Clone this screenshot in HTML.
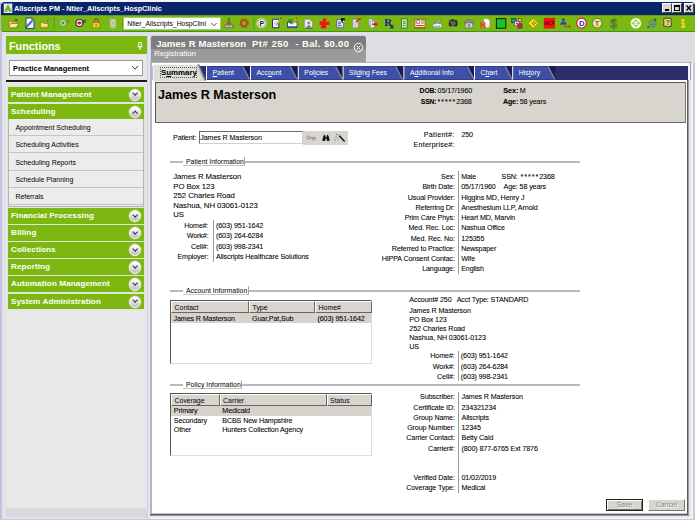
<!DOCTYPE html>
<html><head><meta charset="utf-8"><title>Allscripts PM - Ntier_Allscripts_HospClinic</title>
<style>
*{box-sizing:border-box;margin:0;padding:0}
html,body{width:695px;height:520px;overflow:hidden;background:#e0e0ec;font-family:"Liberation Sans",sans-serif;}
body{position:relative;font-size:6.9px;color:#000;line-height:1}
.a{position:absolute;white-space:nowrap}
.t{position:absolute;white-space:nowrap;line-height:10px;height:10px;font-size:7.15px;letter-spacing:-0.12px;color:#000;-webkit-text-stroke:0.07px #000}
.r{text-align:right}
.b{font-weight:bold}
#title{left:1px;top:2px;width:694px;height:12.5px;background:#0a246a;border-radius:4px 4px 0 0}
#toolbar{left:1px;top:14.5px;width:694px;height:17px;background:#7cb811;border-top:1px solid #5f9c12;border-bottom:1.3px solid #3a9420}
.acc{position:absolute;left:8px;width:136px;height:15.5px;background:#7cb811;color:#fff;font-weight:bold;font-size:8.1px;letter-spacing:0.1px;line-height:16.8px;padding-left:3px;white-space:nowrap}
.acc i{position:absolute;right:2.9px;top:2px;width:12.3px;height:12.3px;border-radius:50%;background:linear-gradient(#fdfdfd 10%,#c4c4c4 90%);border:1.2px solid #f4f6f0;box-shadow:0 0 0 0.4px #b8c8a0}
.acc i:after{content:"";position:absolute;left:3px;top:1.9px;width:3.3px;height:3.3px;border-right:1.2px solid #333;border-bottom:1.2px solid #333;transform:rotate(45deg)}
.acc i.up:after{top:4.2px;transform:rotate(225deg)}
.sub{position:absolute;left:9px;width:134px;height:17px;font-size:6.95px;line-height:17.6px;padding-left:6.4px;border-bottom:1px solid #c4c4c4;color:#000;white-space:nowrap}
.tab{position:absolute;top:66px;height:14px;background:#3c50a6;color:#fff;font-size:6.9px;line-height:13px;border-left:1px solid #fff;}
.tb{color:#fff;font-size:6.9px;line-height:12px}
u{text-decoration-thickness:0.5px;text-underline-offset:0.5px}
.grp{position:absolute;height:1.5px;background:#bababa;border-bottom:0}
.glab{position:absolute;height:9.6px;background:#fff;border-right:1px solid #a8a8a8;border-bottom:1px solid #c4c4c4;font-size:6.9px;line-height:9.6px;padding-left:3px;color:#000;white-space:nowrap}
.lst{position:absolute;left:170px;width:202.3px;background:#fff;border:1px solid #555;border-right-color:#ddd;border-bottom-color:#ddd}
.hd{position:absolute;top:0;height:12px;background:#d8d5ce;border:1px solid #fff;border-right-color:#666;border-bottom-color:#666;font-size:6.9px;line-height:11px;padding-left:2.6px;color:#000}
.sel{position:absolute;left:0;width:200.3px;height:10px;background:#d6d3cc}
.vsep{position:absolute;width:1px;background:#9a9a9a}
.btn{position:absolute;top:499px;height:12px;background:#d8d5ce;color:#858585;text-shadow:0.7px 0.7px 0 #fff;font-size:6.9px;line-height:10px;text-align:center;border:1px solid #fff;border-right-color:#777;border-bottom-color:#777}
</style></head><body>
<!-- window frame -->
<div class="a" style="left:0;top:0;width:695px;height:3px;background:#f4f4fa"></div>
<div class="a" style="left:0;top:2px;width:1.4px;height:518px;background:#b8b8d6"></div>
<div class="a" id="title"></div>
<svg class="a" style="left:2.5px;top:3px" width="10" height="10.5" viewBox="0 0 10 11"><rect x="0.5" y="0.5" width="9" height="10" fill="#e6ece0"/><path d="M1.5 9 L5 2.5 L8.5 9 M3 9.3 L5 5.5 L7 9.3" stroke="#6aa51e" stroke-width="1.2" fill="none"/></svg>
<div class="a b" style="left:14px;top:2.7px;font-size:7.25px;line-height:11px;color:#fff">Allscripts PM - Ntier_Allscripts_HospClinic</div>
<!-- window buttons -->
<div class="a" style="left:662px;top:3px;width:10px;height:10px;background:#d8d5ce;border:1px solid #fff;border-right-color:#444;border-bottom-color:#444"></div>
<div class="a" style="left:665px;top:9px;width:4px;height:2px;background:#000"></div>
<div class="a" style="left:672px;top:3px;width:10px;height:10px;background:#d8d5ce;border:1px solid #fff;border-right-color:#444;border-bottom-color:#444"></div>
<div class="a" style="left:674px;top:5px;width:6px;height:6px;border:1px solid #000;border-top-width:2px"></div>
<div class="a" style="left:684px;top:3px;width:10px;height:10px;background:#d8d5ce;border:1px solid #fff;border-right-color:#444;border-bottom-color:#444"></div>
<svg class="a" style="left:684px;top:3px" width="10" height="10"><path d="M2.5 2.5 L7 7.5 M7 2.5 L2.5 7.5" stroke="#000" stroke-width="1.3"/></svg>
<div class="a" id="toolbar"></div>
<svg class="a" style="left:0;top:14px" width="695" height="19" viewBox="0 14 695 19" font-family="Liberation Sans,sans-serif">
<path d="M8.6 21 h3.2 l1 1 h4.4 v5.6 h-8.600z" fill="#e8d050" stroke="#807020" stroke-width=".7"/><path d="M8.600 27.700 l2.300 -4.200 h7.800 l-2.400 4.200z" fill="#f8ec98" stroke="#807020" stroke-width=".7"/><path d="M14 20.200 q2 -1.500 3.400 0.300 m0 0 l-1.500 0 m1.500 0 l0.100 -1.400" stroke="#2848a0" stroke-width=".8" fill="none"/>
<path d="M26 18 h5.800 l2.200 2.200 v8.200 h-8z" fill="#f4f6ff" stroke="#283c90" stroke-width="1"/><path d="M31.800 18 v2.200 h2.200" fill="none" stroke="#283c90" stroke-width=".6"/><path d="M26.200 27 L32.400 20.800" stroke="#5068c0" stroke-width="2"/><path d="M25.600 27.800 l1.400 -0.400" stroke="#203070" stroke-width="1"/>
<path d="M40.300 22.300 h2.800 l1 1 h4 v4.500 h-7.800z" fill="#ecd454" stroke="#807020" stroke-width=".7"/><path d="M41.200 25 h6" stroke="#f8f0a0" stroke-width="1.200"/><path d="M47.200 20.800 l1.200 -1.300" stroke="#2040a0" stroke-width="1"/>
<path d="M54.2 17.5 V30" stroke="#3c9a50" stroke-width="1.2" stroke-dasharray="1.6 0.5"/>
<path d="M65.500 21.500 l4 -2.300 l-1 2.300 l1 0.500 l-3.500 1.500z" fill="#5a8a50"/><circle cx="63" cy="23" r="3.400" fill="#c4e4a8" stroke="#5a9a3a" stroke-width=".9"/><circle cx="63" cy="23" r="1.500" fill="#22aa22"/>
<path d="M82 21.500 l4.200 -2.500 l-1 2.500 l1 0.600 l-3.800 1.600z" fill="#2a5a30"/><circle cx="79.400" cy="23" r="3.500" fill="#fff" stroke="#203070" stroke-width="1.100"/><circle cx="79.400" cy="23" r="1.700" fill="#e81818"/><path d="M76.500 23 h5.800" stroke="#e81818" stroke-width=".8"/>
<path d="M94.300 23 v-2 a2 2 0 0 1 4 0 v2" stroke="#a05828" stroke-width="1.300" fill="none"/><path d="M95 20 l1 -1.200 M97.600 20 l-0.600 -1.400" stroke="#3858b0" stroke-width=".8"/><rect x="92.800" y="22.800" width="7" height="5" fill="#f0d428" stroke="#907010" stroke-width=".6"/><path d="M95.600 24 l1.800 1.200 l-1.800 1.300z" fill="#d02818"/>
<rect x="110" y="18.600" width="6" height="9.500" fill="#c4e0a4" stroke="#86b060" stroke-width=".8"/><path d="M111.300 20 h3.400 l-1.700 3.300 l1.700 3.300 h-3.400 l1.700 -3.300z" fill="#e4f0d4" stroke="#7aa058" stroke-width=".5"/>
<path d="M122.6 17.5 V30" stroke="#3c9a50" stroke-width="1.2" stroke-dasharray="1.6 0.5"/>
<circle cx="228.900" cy="19" r="1.500" fill="#3a8a2a"/><path d="M226.800 24.400 q0 -4 2.100 -4 q2.100 0 2.100 4z" fill="#a84820"/><path d="M228.200 21 v3 M229.600 21 v3" stroke="#60a040" stroke-width=".5"/><rect x="224.300" y="24.700" width="9.600" height="2.900" rx="1.200" fill="#8a8a8a" stroke="#555" stroke-width=".4"/><path d="M225.600 26.200 h7" stroke="#fff" stroke-width="1" stroke-dasharray="1 0.800"/>
<circle cx="244.100" cy="23.200" r="3.600" fill="none" stroke="#b84c20" stroke-width="2.400" stroke-dasharray="1.900 0.930"/><circle cx="244.100" cy="23.200" r="2.900" fill="none" stroke="#b84c20" stroke-width="1.500"/><circle cx="244.100" cy="23.200" r="3.300" fill="none" stroke="#e02020" stroke-width=".7" stroke-dasharray="0.700 1.890"/>
<path d="M253.8 17.5 V30" stroke="#3c9a50" stroke-width="1.2" stroke-dasharray="1.6 0.5"/>
<circle cx="261.500" cy="23.200" r="5" fill="#d4e8bc" stroke="#a4cc78" stroke-width=".8"/><circle cx="261.500" cy="23.200" r="3.900" fill="#eef4e8" stroke="#708060" stroke-width=".5"/><text x="261.700" y="25.700" font-size="6.800" font-weight="bold" text-anchor="middle" fill="#1c241c">P</text>
<path d="M272.500 19.300 h6.300 v8.400 h-6.300z" fill="#fff" stroke="#24347c" stroke-width="1"/><path d="M273.800 21.500 h3 M273.800 23.300 h3.500 M273.800 25.200 h3.500" stroke="#9098b8" stroke-width=".6"/><path d="M277.300 24 L280.800 18.300" stroke="#d8b020" stroke-width="1.500"/><path d="M280.300 19 L281 17.900" stroke="#3048a0" stroke-width="1.500"/><path d="M277 24.600 l0.500 -1" stroke="#222" stroke-width="1"/>
<path d="M287.500 22 h9.600 v5.600 h-9.600z" fill="#f4f8ff" stroke="#20307c" stroke-width=".8"/><path d="M287.500 26.300 h9.600 v1.300 h-9.600z" fill="#2840a8"/><path d="M288.300 19 l4.500 0.500 l-0.500 3.500 l-4 -0.500z" fill="#2e9a3e"/><path d="M289 21.800 l3 2 " stroke="#186828" stroke-width="1.200"/><path d="M292.600 24.400 L296.600 18.400" stroke="#d8b020" stroke-width="1.400"/><path d="M296.200 19 L296.900 18" stroke="#c03020" stroke-width="1.400"/>
<path d="M304.300 19.200 h5.300 l3 3 v6.200 h-8.300z" fill="#e8e8e8" stroke="#888" stroke-width=".8"/><circle cx="308.800" cy="23" r="1.500" fill="#8a8a8a"/><path d="M305.800 27.800 q3 -5 6 0z" fill="#777"/><path d="M305 28.300 h8" stroke="#555" stroke-width=".8"/>
<path d="M322.800 18.600 h3.400 v3 h3.200 v3.400 h-3.200 v3.400 h-3.400 v-3.400 h-3.200 v-3.400 h3.200z" fill="#f01414"/><path d="M325.500 22.500 l2.500 -4" stroke="#c09020" stroke-width="1.100"/><path d="M321 28 l2 -2.500" stroke="#c01010" stroke-width="1.500"/>
<path d="M336.800 19.500 h6.800 v8.300 h-6.800z" fill="#f0f4ff" stroke="#405090" stroke-width=".8"/><path d="M338 22 h3 M338 23.800 h3 M338 25.800 h4" stroke="#3858c0" stroke-width="1"/><path d="M341 18 h3.800 v2 l-1 3 h-1.800 l-1 -2.500z" fill="#111"/><circle cx="343.600" cy="21.600" r="1.100" fill="#e8e8e8"/>
<path d="M352.600 19.300 h5.500 v8.500 h-5.500z" fill="#f0f0f0" stroke="#808890" stroke-width=".8"/><path d="M354 21.500 v5 M355.800 22.500 v4" stroke="#a0a8b0" stroke-width=".8"/><path d="M356 22.300 l2.500 -2.800" stroke="#e81818" stroke-width="1.600"/><path d="M357.300 18.300 h4.500 l-2 1.800z" fill="#e81818"/>
<path d="M368.800 19 h4 v6 h-4z" fill="#f4f4f4" stroke="#808890" stroke-width=".7"/><path d="M370.200 21 h4.200 v6.800 h-4.200z" fill="#ececec" stroke="#808890" stroke-width=".7"/><path d="M372 24.200 h4" stroke="#e81818" stroke-width="1.600"/><path d="M375.300 22 l3 2.200 l-3 2.200z" fill="#e81818"/>
<text x="384.200" y="26.300" font-size="11" font-weight="bold" fill="#1a1a8c" font-family="Liberation Serif,serif">R</text><path d="M389.800 24.500 L393.600 28.500 M393.400 25 L390.200 28.700" stroke="#1a1a8c" stroke-width="1.100"/>
<rect x="401.400" y="18.800" width="5.800" height="9.300" fill="#c8e8b0" stroke="#3a6a3a" stroke-width=".8"/><path d="M403 21.300 h2.600 M403 23.400 h2.600 M403 25.500 h2.600" stroke="#18c028" stroke-width="1.100"/>
<rect x="414.800" y="19.300" width="10.200" height="8.300" fill="#fbf4e4" stroke="#b05c14" stroke-width="1"/><circle cx="418" cy="21.800" r="1.900" fill="#e8e8e8" stroke="#444" stroke-width=".6"/><path d="M421 21 h3 M421 23 h3" stroke="#c04020" stroke-width=".8"/><path d="M416.300 25.600 h7.500" stroke="#d03020" stroke-width="1.100"/><path d="M414.500 28.200 h10.800" stroke="#804010" stroke-width=".6"/>
<path d="M433.300 24.200 l6.600 -5.200 l1.300 1.200 l-5.800 5z" fill="#b8b8b8" stroke="#606060" stroke-width=".6"/><ellipse cx="437.300" cy="25.600" rx="4.500" ry="2.300" fill="#f0f4f8" stroke="#708090" stroke-width=".7"/><path d="M434.500 25.800 q2.800 1.800 5.600 0" stroke="#5080c0" stroke-width=".9" fill="none"/>
<rect x="448.800" y="20.300" width="8.600" height="6" rx=".8" fill="#2a2a2a"/><rect x="451" y="19.300" width="3.500" height="1.500" fill="#2a2a2a"/><circle cx="453.200" cy="23.400" r="1.900" fill="#555" stroke="#999" stroke-width=".6"/><rect x="449.600" y="21.200" width="1.300" height="1" fill="#aaa"/>
<path d="M464 22 q5 -4.800 10 0 l-0.800 1.600 l-2.200 -1.200 h-4 l-2.200 1.200z" fill="#909090" stroke="#555" stroke-width=".5"/><path d="M466 22.800 h6 l1.500 5 h-9z" fill="#d4d4d4" stroke="#666" stroke-width=".7"/><circle cx="469" cy="25.300" r="1.400" fill="#888"/>
<path d="M483.800 18.800 h4 l2 2 v6 h-6z" fill="#fff" stroke="#999" stroke-width=".6"/><path d="M480.200 22 h1.900 v2.200 h1.400 v-2.200 h1.900 v6.200 h-1.900 v-2.300 h-1.400 v2.300 h-1.900z" fill="#e0502c"/><path d="M486 23 h2.800 v4.500 h-2.800z" fill="#f4ece8"/>
<rect x="496.400" y="18.600" width="9.400" height="9.600" fill="#16c430" stroke="#0c1c0c" stroke-width="1"/>
<rect x="511.500" y="18.500" width="4.500" height="4" fill="#2c9c4c" stroke="#1c3c8c" stroke-width=".8"/><rect x="514.500" y="21.200" width="4.800" height="4.600" fill="#f0f0f8" stroke="#3040a0" stroke-width=".6"/><rect x="517.800" y="23.800" width="4.200" height="4.300" fill="#e81c1c" stroke="#2030a0" stroke-width=".6"/><rect x="518.300" y="18.500" width="3.200" height="2.800" fill="#e8d020" stroke="#403010" stroke-width=".5"/><circle cx="516.800" cy="23.300" r="1.100" fill="#e04040"/>
<path d="M533.200 18.300 L538 23.300 L533.200 28.300 L528.400 23.300z" fill="#f4e41c" stroke="#a09010" stroke-width=".7"/><path d="M534.300 21.300 L532.200 23.300 L534.300 25.300" stroke="#605010" stroke-width=".9" fill="none"/><circle cx="535" cy="23.300" r=".7" fill="#605010"/>
<rect x="543.800" y="17.900" width="11.200" height="10.600" fill="#f01616"/><text x="549.400" y="25" font-size="5" font-weight="bold" text-anchor="middle" fill="#5a0808">HCF</text>
<circle cx="563.400" cy="19.700" r="1.500" fill="#2c48a8"/><path d="M560.400 24.400 q0 -3 3 -3 q3 0 3 3z" fill="#2c48a8"/><path d="M560 24.600 h7" stroke="#3c58b8" stroke-width=".7"/><path d="M563.500 26.700 h6.500" stroke="#b04820" stroke-width="1.100"/><path d="M569 25 l2.200 1.700 l-2.200 1.700z" fill="#b04820"/>
<circle cx="581.500" cy="23.100" r="4.900" fill="#fff" stroke="#d42424" stroke-width="1.200"/><text x="581.700" y="25.900" font-size="7.800" font-weight="bold" text-anchor="middle" fill="#2430c4">D</text>
<circle cx="597.100" cy="23.100" r="4.900" fill="#dce8a4" stroke="#6c8430" stroke-width="1.100"/><text x="597.100" y="25.800" font-size="7.600" font-weight="bold" text-anchor="middle" fill="#b8501c">T</text>
<text x="613.600" y="27.600" font-size="12.500" text-anchor="middle" fill="#9ccc50" stroke="#35553a" stroke-width=".55">$</text>
<circle cx="635.900" cy="23.200" r="5.300" fill="#f6faf0"/><path d="M635.900 18.900 l2 2.600 h-4z M635.900 27.500 l2 -2.600 h-4z M631.600 23.200 l2.600 -2 v4z M640.200 23.200 l-2.600 -2 v4z" fill="#8cc440"/><path d="M630.600 23.200 h10.600" stroke="#a8d468" stroke-width=".5"/>
<path d="M649.500 24.300 a3.300 3.300 0 1 1 6.400 0 h-4.600 a2 2 0 0 0 4 1.200" stroke="#5880a8" stroke-width="1.400" fill="none"/><path d="M648 27.500 q4 -1.500 8 -8" stroke="#4c8c3c" stroke-width="1" fill="none"/><path d="M653 19 l3.500 -0.500 l-1 2.500" fill="#3c5c3c"/><path d="M647.300 27.800 l2.300 -0.200 l-1.800 -1.800z" fill="#2038a0"/>
<path d="M663.800 18.300 h7.300 v8 h-2.300 l-0.800 1.300 l-1 -1.300 h-3.200z" fill="#f4e43c" stroke="#283478" stroke-width=".9"/><text x="667.500" y="25" font-size="6.800" font-weight="bold" text-anchor="middle" fill="#2848b8">?</text>
<circle cx="683" cy="20.300" r="1.500" fill="#f0e01c"/><path d="M681.300 22 h3 l0.300 4 h1 v2 h-4.600 v-2 h1.300 l-0.200 -2.300 h-1.200z" fill="#f0e01c" stroke="#b0a010" stroke-width=".3"/>
</svg>
<!-- toolbar combo -->
<div class="a" style="left:123px;top:16.8px;width:97.8px;height:13.6px;background:#fff;border:1px solid #a4cc6c;border-left-width:0.6px"></div>
<div class="a" style="left:127.2px;top:18.3px;font-size:6.85px;line-height:11px;color:#000">Ntier_Allscripts_HospClini</div>
<svg class="a" style="left:209.8px;top:21.5px" width="8" height="6"><path d="M1.300 1 L4 3.800 L6.700 1" stroke="#444" stroke-width=".9" fill="none"/></svg>

<!-- side frame -->
<div class="a" style="left:0;top:31px;width:2px;height:489px;background:#c3c3dc"></div>
<div class="a" style="left:2px;top:32px;width:4px;height:488px;background:#e2e2ee"></div>
<div class="a" style="left:0;top:518.5px;width:695px;height:1.5px;background:#c8c8de"></div>
<div class="a" style="left:146px;top:36px;width:6px;height:482px;background:#d0d0e4"></div>
<div class="a" style="left:148px;top:36px;width:2px;height:482px;background:#e6e6f0"></div>
<div class="a" style="left:692.5px;top:62px;width:2.5px;height:458px;background:#c8c8de"></div>

<!-- Functions panel -->
<div class="a" style="left:6px;top:36px;width:141px;height:481px;background:#e8e8e8"></div>
<div class="a" style="left:6px;top:508px;width:141px;height:9px;background:#d9d9d9"></div>
<div class="a" style="left:6px;top:36px;width:141px;height:18px;background:#7cb811"></div>
<div class="a b" style="left:9px;top:38.5px;font-size:10.8px;line-height:14px;color:#fff">Functions</div>
<svg class="a" style="left:136.5px;top:42.3px" width="6" height="9"><path d="M1.700 0.500 h2.600 v4 h-2.600 z M0.700 4.800 h4.600 M3 5 v3" stroke="#fff" stroke-width="1" fill="none"/></svg>
<div class="a" style="left:9px;top:60px;width:134px;height:16px;background:#fff;border:1px solid #9a9a9a"></div>
<div class="a b" style="left:13px;top:63px;font-size:7.4px;line-height:12px;color:#000">Practice Management</div>
<svg class="a" style="left:131px;top:65px" width="8" height="6"><path d="M1 1 L4 4.2 L7 1" stroke="#333" stroke-width="1" fill="none"/></svg>
<div class="a" style="left:6px;top:80px;width:141px;height:2px;background:#1a1a1a"></div>
<div class="a" style="left:7px;top:85px;width:139px;height:225px;background:#dfe7d6"></div>

<div class="acc" style="top:86.5px">Patient Management<i></i></div>
<div class="acc" style="top:103.5px">Scheduling<i class="up"></i></div>
<div class="a" style="left:8px;top:118.5px;width:136px;height:88.5px;background:#ececec;border:1px solid #b4b4b4;border-top:0"></div>
<div class="sub" style="top:119px">Appointment Scheduling</div>
<div class="sub" style="top:136.3px">Scheduling Activities</div>
<div class="sub" style="top:153.6px">Scheduling Reports</div>
<div class="sub" style="top:170.9px">Schedule Planning</div>
<div class="sub" style="top:188.2px">Referrals</div>
<div class="acc" style="top:208px">Financial Processing<i></i></div>
<div class="acc" style="top:225.1px">Billing<i></i></div>
<div class="acc" style="top:242.2px">Collections<i></i></div>
<div class="acc" style="top:259.3px">Reporting<i></i></div>
<div class="acc" style="top:276.4px">Automation Management<i></i></div>
<div class="acc" style="top:293.5px">System Administration<i></i></div>

<!-- Document tab -->
<div class="a" style="left:150px;top:35px;width:216.6px;height:28px;background:linear-gradient(#7a7a7a 0,#808080 12.8px,#989898 13.2px,#9e9e9e 100%);border:1.2px solid #d2d2d6;border-bottom:0;border-radius:3px 3px 0 0"></div>
<div class="a b" style="left:156.3px;top:38px;font-size:9.5px;line-height:12px;color:#fff;word-spacing:0.3px"><span id="t1">James R Masterson</span> &nbsp;<span id="t2" style="letter-spacing:0.44px">Pt# 250</span> &nbsp;<span id="t3" style="letter-spacing:0.3px;margin-left:0.8px">- Bal. $0.00</span></div>
<div class="a" style="left:154.3px;top:49px;font-size:7.8px;line-height:9px;color:#fff">Registration</div>
<svg class="a" style="left:353px;top:42px" width="11" height="11"><circle cx="5.5" cy="5.5" r="4.3" stroke="#fff" stroke-width="1" fill="none"/><path d="M3.6 3.6 L7.4 7.4 M7.4 3.6 L3.6 7.4" stroke="#fff" stroke-width="1"/></svg>

<!-- content panel -->
<div class="a" style="left:366px;top:31.5px;width:329px;height:31px;background:#dddde2"></div>
<div class="a" style="left:150px;top:62px;width:542.5px;height:456.5px;background:#f2f2f8"></div>
<div class="a" style="left:150px;top:62px;width:540.8px;height:455px;background:#e4e4e6"></div>
<div class="a" style="left:150px;top:62px;width:539.2px;height:453.6px;background:#9a9a9a"></div>
<div class="a" style="left:150px;top:62px;width:538.3px;height:452.8px;background:#5a5a5a"></div>
<div class="a" style="left:150px;top:62px;width:537.2px;height:451.5px;background:#b4b4c4"></div>
<div class="a" style="left:151.5px;top:62px;width:535.7px;height:451.5px;background:#c4c4c8"></div>
<div class="a" style="left:152.3px;top:63.3px;width:534.9px;height:450.2px;background:#fff"></div>
<!-- tab strip -->
<div class="a" style="left:687px;top:62px;width:5.5px;height:18px;background:#f2f2f6"></div>
<div class="a" style="left:690.3px;top:62px;width:1.2px;height:18px;background:#a2a2a6"></div>
<div class="a" style="left:150px;top:62px;width:541.5px;height:1.2px;background:#b4b4b8"></div>
<div class="a" style="left:152.3px;top:66px;width:536.1px;height:13.6px;background:#2b2d6c"></div>

<!-- header panel -->
<div class="a" style="left:155px;top:82px;width:531px;height:41px;background:#d8d5cf;border:1px solid #555;border-right-color:#777;border-bottom-color:#666"></div>
<div class="a b" style="left:158px;top:86.7px;font-size:12.6px;line-height:16px;color:#000">James R Masterson</div>
<svg class="a" style="left:0;top:60px" width="695" height="24" viewBox="0 60 695 24"><path d="M152.3 63.4 H198.4 L205.4 81.5 H152.3z" fill="#fff"/><path d="M153.5 64.8 H198.8 L205.4 81.5 H153.5z" fill="#dfddd8"/><path d="M198.4 64.5 L205.6 80.5" stroke="#6e6e6e" stroke-width="1.8" fill="none"/><path d="M197.4 64.5 L203.6 79.5" stroke="#b4b2ae" stroke-width="1.2" fill="none"/><path d="M207 66.6 H242.5 L249.3 79.4 H207z" fill="#3c50a7"/><path d="M206.5 66.2 V79.6" stroke="#fff" stroke-width="1"/><path d="M243.3 66 H250.1 V79.6z" fill="#1b1d4c"/><path d="M242.8 66.4 L249.6 79.6" stroke="#8e90a8" stroke-width="1.1"/><path d="M251 66.6 H290 L296.8 79.4 H251z" fill="#3c50a7"/><path d="M250.5 66.2 V79.6" stroke="#fff" stroke-width="1"/><path d="M290.8 66 H297.6 V79.6z" fill="#1b1d4c"/><path d="M290.3 66.4 L297.1 79.6" stroke="#8e90a8" stroke-width="1.1"/><path d="M298.8 66.6 H335.3 L342.1 79.4 H298.8z" fill="#3c50a7"/><path d="M298.3 66.2 V79.6" stroke="#fff" stroke-width="1"/><path d="M336.1 66 H342.90000000000003 V79.6z" fill="#1b1d4c"/><path d="M335.6 66.4 L342.40000000000003 79.6" stroke="#8e90a8" stroke-width="1.1"/><path d="M343.6 66.6 H395.4 L402.2 79.4 H343.6z" fill="#3c50a7"/><path d="M343.1 66.2 V79.6" stroke="#fff" stroke-width="1"/><path d="M396.2 66 H403.0 V79.6z" fill="#1b1d4c"/><path d="M395.7 66.4 L402.5 79.6" stroke="#8e90a8" stroke-width="1.1"/><path d="M404.4 66.6 H467 L473.8 79.4 H404.4z" fill="#3c50a7"/><path d="M403.9 66.2 V79.6" stroke="#fff" stroke-width="1"/><path d="M467.8 66 H474.6 V79.6z" fill="#1b1d4c"/><path d="M467.3 66.4 L474.1 79.6" stroke="#8e90a8" stroke-width="1.1"/><path d="M475 66.6 H505 L511.8 79.4 H475z" fill="#3c50a7"/><path d="M474.5 66.2 V79.6" stroke="#fff" stroke-width="1"/><path d="M505.8 66 H512.6 V79.6z" fill="#1b1d4c"/><path d="M505.3 66.4 L512.1 79.6" stroke="#8e90a8" stroke-width="1.1"/><path d="M513.2 66.6 H547.8 L554.5999999999999 79.4 H513.2z" fill="#3c50a7"/><path d="M512.7 66.2 V79.6" stroke="#fff" stroke-width="1"/><path d="M548.5999999999999 66 H555.4 V79.6z" fill="#1b1d4c"/><path d="M548.0999999999999 66.4 L554.9 79.6" stroke="#8e90a8" stroke-width="1.1"/></svg>
<div class="a tb" style="left:212.5px;top:67px"><u>P</u>atient</div>
<div class="a tb" style="left:256.5px;top:67px">Acc<u>o</u>unt</div>
<div class="a tb" style="left:304.3px;top:67px">Pol<u>i</u>cies</div>
<div class="a tb" style="left:349.1px;top:67px">Sli<u>d</u>ing Fees</div>
<div class="a tb" style="left:409.9px;top:67px">A<u>d</u>ditional Info</div>
<div class="a tb" style="left:480.5px;top:67px">C<u>h</u>art</div>
<div class="a tb" style="left:518.7px;top:67px">His<u>t</u>ory</div>
<div class="a b" style="left:159.8px;top:67.4px;width:37px;height:10.2px;border:1px dotted #5a5a5a;font-size:7.9px;line-height:9.2px;padding-left:0.2px;color:#000">S<u>u</u>mmary</div>
<div class="t r " style="right:258.5px;top:86.1px;font-size:6.8px"><b>DOB:</b></div>
<div class="t " style="left:437.6px;top:86.1px;">05/17/1960</div>
<div class="t r " style="right:258.5px;top:97.2px;font-size:6.8px"><b>SSN:</b></div>
<div class="t " style="left:437.6px;top:97.2px;"><span style="letter-spacing:0.95px">*****</span>2368</div>
<div class="t r " style="right:176.79999999999995px;top:86.1px;font-size:7.3px"><b>Sex:</b></div>
<div class="t " style="left:519.7px;top:86.1px;">M</div>
<div class="t r " style="right:176.79999999999995px;top:97.2px;font-size:7.1px"><b>Age:</b></div>
<div class="t " style="left:519.7px;top:97.2px;">58 years</div>
<div class="t r " style="right:498.7px;top:133.1px;">Patient:</div>
<div class="a" style="left:198.5px;top:130.5px;width:104px;height:13.5px;background:#fff;border:1px solid #6a6a6a;border-right-color:#d0d0d0;border-bottom-color:#d0d0d0"></div>
<div class="t " style="left:200.3px;top:132.9px;">James R Masterson</div>
<div class="a" style="left:303px;top:130.5px;width:45px;height:14px;background:#d8d5ce"></div>
<svg class="a" style="left:303px;top:130.5px" width="45" height="14" viewBox="0 0 45 14">
<g stroke="#8a8a8a" stroke-width="0.9" fill="none"><ellipse cx="5.3" cy="6.6" rx="1.5" ry="1.7"/><path d="M6.8 6.6 H12.6 M9.2 6.8 V9.2 M10.8 6.8 V9.4 M12.3 6.8 V8.8"/></g>
<g fill="#111"><path d="M19.2 9.8 L20.4 5 L21.6 3.6 L22.4 5 L22.6 6.2 L23.4 6.2 L23.6 5 L24.4 3.6 L25.6 5 L26.8 9.8 L24 10 L23.4 7.6 L22.6 7.6 L22 10 Z"/></g>
<path d="M35.8 4.2 L41.6 10.6" stroke="#111" stroke-width="1.5"/><path d="M35.2 3.6 L36.4 4.9" stroke="#d8c020" stroke-width="1.5"/>
<g fill="#3355cc"><rect x="32.6" y="5.4" width="1" height="1"/><rect x="34.6" y="7.6" width="1" height="1"/><rect x="31.6" y="8.4" width="1" height="1"/><rect x="33.2" y="2.8" width="1" height="1"/></g>
</svg>
<div class="t r " style="right:240.5px;top:129.6px;letter-spacing:0.28px">Patient#:</div>
<div class="t " style="left:461.4px;top:129.6px;">250</div>
<div class="t r " style="right:240.5px;top:140.0px;letter-spacing:0.2px">Enterprise#:</div>
<div class="grp" style="left:170px;top:161.3px;width:410px"></div>
<div class="glab" style="left:183px;top:156.8px;width:61.5px">Patient Information</div>
<div class="grp" style="left:170px;top:290.3px;width:410px"></div>
<div class="glab" style="left:183px;top:285.8px;width:66px">Account Information</div>
<div class="grp" style="left:170px;top:384.4px;width:410px"></div>
<div class="glab" style="left:183px;top:379.9px;width:58.5px">Policy Information</div>
<div class="t " style="left:173.3px;top:172.4px;font-size:7.8px;letter-spacing:-0.08px;color:#000">James R Masterson</div>
<div class="t " style="left:173.3px;top:181.8px;font-size:7.8px;letter-spacing:-0.08px;color:#000">PO Box 123</div>
<div class="t " style="left:173.3px;top:191.1px;font-size:7.8px;letter-spacing:-0.08px;color:#000">252 Charles Road</div>
<div class="t " style="left:173.3px;top:200.5px;font-size:7.8px;letter-spacing:-0.08px;color:#000">Nashua, NH 03061-0123</div>
<div class="t " style="left:173.3px;top:209.8px;font-size:7.8px;letter-spacing:-0.08px;color:#000">US</div>
<div class="t r " style="right:486.5px;top:220.6px;">Home#:</div>
<div class="t " style="left:216px;top:220.6px;">(603) 951-1642</div>
<div class="t r " style="right:486.5px;top:231.2px;">Work#:</div>
<div class="t " style="left:216px;top:231.2px;">(603) 264-6284</div>
<div class="t r " style="right:486.5px;top:241.8px;">Cell#:</div>
<div class="t " style="left:216px;top:241.8px;">(603) 998-2341</div>
<div class="t r " style="right:486.5px;top:252.4px;">Employer:</div>
<div class="t " style="left:216px;top:252.4px;">Allscripts Healthcare Solutions</div>
<div class="vsep" style="left:212.5px;top:220px;height:42px"></div>
<div class="t r " style="right:240.2px;top:172.1px;">Sex:</div>
<div class="t " style="left:461.2px;top:172.1px;">Male</div>
<div class="t r " style="right:240.2px;top:182.3px;">Birth Date:</div>
<div class="t " style="left:461.2px;top:182.3px;">05/17/1960</div>
<div class="t r " style="right:240.2px;top:192.6px;">Usual Provider:</div>
<div class="t " style="left:461.2px;top:192.6px;">Higgins MD, Henry J</div>
<div class="t r " style="right:240.2px;top:202.8px;">Referring Dr:</div>
<div class="t " style="left:461.2px;top:202.8px;">Anesthesium LLP, Arnold</div>
<div class="t r " style="right:240.2px;top:213.1px;">Prim Care Phys:</div>
<div class="t " style="left:461.2px;top:213.1px;">Heart MD, Marvin</div>
<div class="t r " style="right:240.2px;top:223.3px;">Med. Rec. Loc:</div>
<div class="t " style="left:461.2px;top:223.3px;">Nashua Office</div>
<div class="t r " style="right:240.2px;top:233.6px;">Med. Rec. No:</div>
<div class="t " style="left:461.2px;top:233.6px;">125355</div>
<div class="t r " style="right:240.2px;top:243.8px;">Referred to Practice:</div>
<div class="t " style="left:461.2px;top:243.8px;">Newspaper</div>
<div class="t r " style="right:240.2px;top:254.1px;">HIPPA Consent Contac:</div>
<div class="t " style="left:461.2px;top:254.1px;">Wife</div>
<div class="t r " style="right:240.2px;top:264.4px;">Language:</div>
<div class="t " style="left:461.2px;top:264.4px;">English</div>
<div class="t " style="left:501.5px;top:172.1px;">SSN:</div>
<div class="t " style="left:520.6px;top:172.1px;"><span style="letter-spacing:0.95px">*****</span>2368</div>
<div class="t " style="left:503.5px;top:182.4px;">Age: 58 years</div>
<div class="vsep" style="left:458px;top:171px;height:103px"></div>
<div class="lst" style="top:300px;height:64px"><div class="hd" style="left:0;width:78px">Contact</div><div class="hd" style="left:78px;width:66px">Type</div><div class="hd" style="left:144px;width:56.5px">Home#</div><div class="sel" style="top:12px"></div></div>
<div class="t " style="left:173.5px;top:313.6px;">James R Masterson</div>
<div class="t " style="left:252px;top:313.6px;">Guar,Pat,Sub</div>
<div class="t " style="left:317.5px;top:313.6px;">(603) 951-1642</div>
<div class="t " style="left:409.3px;top:295.0px;">Account# 250 &nbsp; Acct Type: STANDARD</div>
<div class="t " style="left:409.3px;top:306.3px;">James R Masterson</div>
<div class="t " style="left:409.3px;top:315.2px;">PO Box 123</div>
<div class="t " style="left:409.3px;top:324.1px;">252 Charles Road</div>
<div class="t " style="left:409.3px;top:333.0px;">Nashua, NH 03061-0123</div>
<div class="t " style="left:409.3px;top:341.9px;">US</div>
<div class="t r " style="right:240.39999999999998px;top:351.2px;">Home#:</div>
<div class="t " style="left:460.8px;top:351.2px;">(603) 951-1642</div>
<div class="t r " style="right:240.39999999999998px;top:361.6px;">Work#:</div>
<div class="t " style="left:460.8px;top:361.6px;">(603) 264-6284</div>
<div class="t r " style="right:240.39999999999998px;top:372.0px;">Cell#:</div>
<div class="t " style="left:460.8px;top:372.0px;">(603) 998-2341</div>
<div class="vsep" style="left:457.7px;top:351px;height:30px"></div>
<div class="lst" style="top:392.5px;height:63px"><div class="hd" style="left:0;width:48.5px">Coverage</div><div class="hd" style="left:48.5px;width:107px">Carrier</div><div class="hd" style="left:155.5px;width:45px">Status</div><div class="sel" style="top:12px"></div></div>
<div class="t " style="left:173.8px;top:405.9px;">Primary</div>
<div class="t " style="left:222.3px;top:405.9px;">Medicaid</div>
<div class="t " style="left:173.8px;top:415.6px;">Secondary</div>
<div class="t " style="left:222.3px;top:415.6px;">BCBS New Hampshire</div>
<div class="t " style="left:173.8px;top:425.3px;">Other</div>
<div class="t " style="left:222.3px;top:425.3px;">Hunters Collection Agency</div>
<div class="t r " style="right:240.2px;top:392.3px;">Subscriber:</div>
<div class="t " style="left:461.5px;top:392.3px;">James R Masterson</div>
<div class="t r " style="right:240.2px;top:402.5px;">Certificate ID:</div>
<div class="t " style="left:461.5px;top:402.5px;">234321234</div>
<div class="t r " style="right:240.2px;top:412.8px;">Group Name:</div>
<div class="t " style="left:461.5px;top:412.8px;">Allscripts</div>
<div class="t r " style="right:240.2px;top:423.0px;">Group Number:</div>
<div class="t " style="left:461.5px;top:423.0px;">12345</div>
<div class="t r " style="right:240.2px;top:433.3px;">Carrier Contact:</div>
<div class="t " style="left:461.5px;top:433.3px;">Betty Caid</div>
<div class="t r " style="right:240.2px;top:443.6px;">Carrier#:</div>
<div class="t " style="left:461.5px;top:443.6px;">(800) 877-6765 Ext 7876</div>
<div class="t r " style="right:240.2px;top:472.7px;">Verified Date:</div>
<div class="t " style="left:461.5px;top:472.7px;">01/02/2019</div>
<div class="t r " style="right:240.2px;top:483.0px;">Coverage Type:</div>
<div class="t " style="left:461.5px;top:483.0px;">Medical</div>
<div class="vsep" style="left:458.2px;top:392px;height:101px"></div>
<div class="btn" style="left:606px;width:37px;border:1px solid #222;box-shadow:inset 1px 1px 0 #fff,inset -1px -1px 0 #777">Save</div>
<div class="btn" style="left:648px;width:37px">Cancel</div>
</body></html>
